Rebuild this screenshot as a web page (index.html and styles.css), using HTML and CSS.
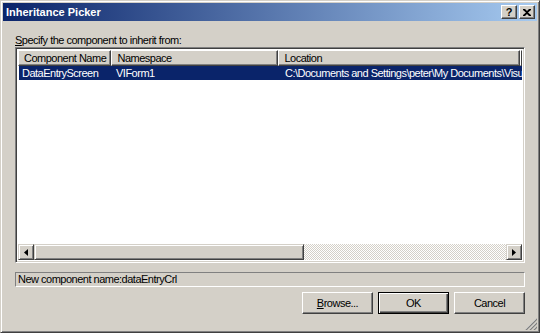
FILE: index.html
```html
<!DOCTYPE html>
<html lang="en">
<head>
    <meta charset="UTF-8">
    <title>Inheritance Picker</title>
    <link rel="stylesheet" href="styles.css">
</head>
<body>
    <div class="window">
        <div class="titlebar">
            <span class="title">Inheritance Picker</span>
            <div class="caption-buttons">
                <span class="cap-btn help">?</span>
                <span class="cap-btn close">
                    <svg width="8" height="7" viewBox="0 0 8 7"><path d="M0 0h2l2 2 2-2h2v1L5 3.5 8 6v1H6L4 5 2 7H0V6l3-2.5L0 1z" fill="#000"/></svg>
                </span>
            </div>
        </div>

        <div class="content">
            <div class="prompt"><u>S</u>pecify the component to inherit from:</div>

            <div class="listview">
                <div class="list-header">
                    <div class="col col-name">Component Name</div>
                    <div class="col col-ns">Namespace</div>
                    <div class="col col-loc">Location</div>
                    <div class="col col-rest"></div>
                </div>
                <div class="list-body">
                    <div class="list-row selected">
                        <span class="cell col-name">DataEntryScreen</span>
                        <span class="cell col-ns">VIForm1</span>
                        <span class="cell col-loc">C:\Documents and Settings\peter\My Documents\Visual Studio Projects</span>
                    </div>
                </div>
                <div class="hscroll">
                    <span class="scroll-btn">
                        <svg width="4" height="7" viewBox="0 0 4 7"><path d="M4 0v7L0 3.5z" fill="#000"/></svg>
                    </span>
                    <span class="scroll-thumb"></span>
                    <span class="scroll-track"></span>
                    <span class="scroll-btn">
                        <svg width="4" height="7" viewBox="0 0 4 7"><path d="M0 0v7l4-3.5z" fill="#000"/></svg>
                    </span>
                </div>
            </div>

            <div class="status">New component name:dataEntryCrl</div>

            <div class="buttons">
                <button class="btn"><u>B</u>rowse...</button>
                <button class="btn default">OK</button>
                <button class="btn">Cancel</button>
            </div>
        </div>

        <svg class="grip" width="12" height="12" viewBox="0 0 12 12">
            <path d="M11 1L1 11M11 5L5 11M11 9L9 11" stroke="#fff" stroke-width="1"/>
            <path d="M12 1L1 12M12 5L5 12M12 9L9 12" stroke="#808080" stroke-width="1.4"/>
        </svg>
    </div>
</body>
</html>
```

FILE: styles.css
```css
body {
    margin: 0;
    font-family: "Liberation Sans", Arial, sans-serif;
    font-size: 11px;
    letter-spacing: -0.5px;
    color: #000;
    background: #d4d0c8;
}
.window {
    position: relative;
    width: 540px;
    height: 333px;
    box-sizing: border-box;
    background: #d4d0c8;
    border: 1px solid;
    border-color: #d4d0c8 #404040 #404040 #d4d0c8;
    box-shadow: inset 1px 1px 0 #fff, inset -1px -1px 0 #808080;
    padding: 2px;
    display: flex;
    flex-direction: column;
}
.titlebar {
    height: 18px;
    display: flex;
    align-items: center;
    justify-content: space-between;
    padding: 0 2px 0 3px;
    background: linear-gradient(to right, #0a246a, #a6caf0);
    color: #fff;
}
.title {
    font-weight: bold;
    font-size: 11px;
    letter-spacing: 0;
}
.caption-buttons {
    display: flex;
    gap: 2px;
}
.cap-btn {
    width: 16px;
    height: 14px;
    box-sizing: border-box;
    background: #d4d0c8;
    border: 1px solid;
    border-color: #fff #404040 #404040 #fff;
    box-shadow: inset -1px -1px 0 #808080;
    color: #000;
    display: flex;
    align-items: center;
    justify-content: center;
    font-weight: bold;
    font-size: 11px;
    letter-spacing: 0;
}
.content {
    flex: 1;
    display: flex;
    flex-direction: column;
    padding: 12px 12px 0 12px;
}
.prompt {
    height: 14px;
    line-height: 14px;
}
.listview {
    height: 216px;
    box-sizing: border-box;
    border: 1px solid;
    border-color: #808080 #fff #fff #808080;
    box-shadow: inset 1px 1px 0 #404040, inset -1px -1px 0 #d4d0c8;
    padding: 2px;
    background: #fff;
    display: flex;
    flex-direction: column;
}
.list-header {
    display: flex;
    height: 16px;
}
.list-header .col {
    box-sizing: border-box;
    height: 16px;
    line-height: 14px;
    padding-left: 5px;
    background: #d4d0c8;
    border: 1px solid;
    border-color: #fff #404040 #404040 #fff;
    box-shadow: inset -1px -1px 0 #808080;
    white-space: nowrap;
    overflow: hidden;
}
.col-name { width: 94px; }
.col-ns { width: 168px; }
.col-loc { width: 243px; }
.list-header .col-rest { flex: 1; padding: 0; }
.list-body {
    flex: 1;
}
.list-row {
    display: flex;
    height: 14px;
    line-height: 14px;
    white-space: nowrap;
    overflow: hidden;
}
.list-row .cell {
    box-sizing: border-box;
    padding-left: 3px;
    overflow: hidden;
}
.list-row .col-loc {
    flex: 1;
    width: auto;
    padding-left: 4px;
}
.list-row.selected {
    background: #0a246a;
    color: #fff;
    margin-left: 1px;
}
.hscroll {
    height: 16px;
    display: flex;
    background: repeating-conic-gradient(#fff 0 25%, #d4d0c8 0 50%) 0 0 / 2px 2px;
}
.scroll-btn {
    width: 16px;
    height: 16px;
    box-sizing: border-box;
    background: #d4d0c8;
    border: 1px solid;
    border-color: #d4d0c8 #404040 #404040 #d4d0c8;
    box-shadow: inset 1px 1px 0 #fff, inset -1px -1px 0 #808080;
    display: flex;
    align-items: center;
    justify-content: center;
}
.scroll-thumb {
    width: 270px;
    height: 16px;
    box-sizing: border-box;
    background: #d4d0c8;
    border: 1px solid;
    border-color: #d4d0c8 #404040 #404040 #d4d0c8;
    box-shadow: inset 1px 1px 0 #fff, inset -1px -1px 0 #808080;
}
.scroll-track {
    flex: 1;
}
.status {
    margin-top: 9px;
    height: 15px;
    box-sizing: border-box;
    line-height: 13px;
    padding-left: 2px;
    border: 1px solid;
    border-color: #808080 #fff #fff #808080;
    white-space: nowrap;
}
.buttons {
    display: flex;
    justify-content: flex-end;
    gap: 5px;
    margin-top: 5px;
}
.btn {
    width: 71px;
    height: 22px;
    box-sizing: border-box;
    font-family: "Liberation Sans", Arial, sans-serif;
    font-size: 11px;
    letter-spacing: -0.5px;
    color: #000;
    background: #d4d0c8;
    border: 1px solid;
    border-color: #fff #404040 #404040 #fff;
    box-shadow: inset -1px -1px 0 #808080;
    padding: 0;
}
.btn.default {
    border-color: #000;
    box-shadow: inset 1px 1px 0 #fff, inset -1px -1px 0 #404040, inset -2px -2px 0 #808080;
}
.grip {
    position: absolute;
    right: 2px;
    bottom: 2px;
}
```
